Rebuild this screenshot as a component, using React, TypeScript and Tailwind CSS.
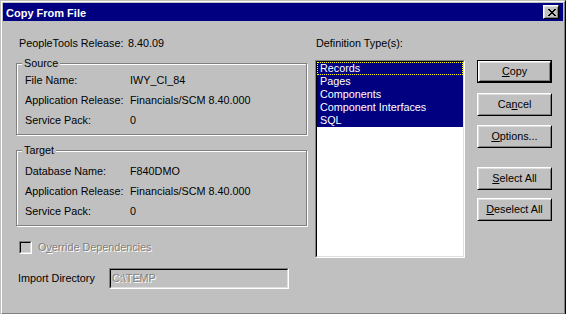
import type { ReactNode } from 'react';

const raised =
  'border border-t-white border-l-white border-r-black border-b-black shadow-[inset_1px_1px_0_#dfdfdf,inset_-1px_-1px_0_#808080]';
const sunkenOuter = 'border border-t-[#808080] border-l-[#808080] border-r-white border-b-white';
const sunkenInner = 'border border-t-black border-l-black border-r-[#dfdfdf] border-b-[#dfdfdf]';

function Push({ children, isDefault }: { children: ReactNode; isDefault?: boolean }) {
  if (isDefault) {
    return (
      <div className="h-[23px] w-[75px] border border-black">
        <div className={`flex h-full w-full items-center justify-center pb-[1px] ${raised}`}>{children}</div>
      </div>
    );
  }
  return <div className={`flex h-[23px] w-[75px] items-center justify-center pb-[1px] ${raised}`}>{children}</div>;
}

function Group({ title, className, children }: { title: string; className: string; children: ReactNode }) {
  return (
    <div className={`relative w-[291px] border border-[#808080] pl-[8px] shadow-[1px_1px_0_#fff,inset_1px_1px_0_#fff] ${className}`}>
      <span className="absolute left-[5px] top-[-7px] bg-[#c0c0c0] px-[2px] leading-[13px]">{title}</span>
      {children}
    </div>
  );
}

function Field({ label, value }: { label: string; value: string }) {
  return (
    <div className="flex h-[20px] leading-[13px]">
      <span className="w-[105px]">{label}</span>
      <span>{value}</span>
    </div>
  );
}

function CloseGlyph() {
  const rows = ['11000011', '01100110', '00111100', '00011000', '00111100', '01100110', '11000011'];
  return (
    <svg width="8" height="7" viewBox="0 0 8 7" shapeRendering="crispEdges">
      {rows.map((r, y) =>
        r.split('').map((c, x) => (c === '1' ? <rect key={`${x}-${y}`} x={x} y={y} width="1" height="1" fill="#000" /> : null))
      )}
    </svg>
  );
}

const TYPES = ['Records', 'Pages', 'Components', 'Component Interfaces', 'SQL'];

export default function App() {
  return (
    <div className="h-[314px] w-[566px] overflow-hidden bg-[#c0c0c0] font-['Liberation_Sans',Arial,sans-serif] text-[10.8px] text-black">
      <div className="h-[315px] w-[566px] border border-t-[#c0c0c0] border-l-[#c0c0c0] border-r-black border-b-black">
        <div className="flex h-full flex-col border border-t-white border-l-white border-r-[#808080] border-b-[#808080] p-[1px]">
          {/* title bar */}
          <div className="flex h-[18px] shrink-0 items-center bg-[#000080] pl-[3px] pr-[4px]">
            <span className="pt-[2px] text-[11px] font-bold leading-[13px] text-white">Copy From File</span>
            <div className={`ml-auto flex h-[14px] w-[16px] items-center justify-center bg-[#c0c0c0] pl-[1px] pt-[1px] ${raised}`}>
              <CloseGlyph />
            </div>
          </div>

          <div className="flex flex-1 pl-[13px] pt-[16px]">
            {/* left column */}
            <div className="flex w-[292px] flex-col">
              <div className="flex pl-[3px] leading-[13px]">
                <span className="w-[109px]">PeopleTools Release:</span>
                <span>8.40.09</span>
              </div>

              <Group title="Source" className="mt-[13px] h-[72px] pt-[10px]">
                <Field label="File Name:" value="IWY_CI_84" />
                <Field label="Application Release:" value="Financials/SCM 8.40.000" />
                <Field label="Service Pack:" value="0" />
              </Group>

              <Group title="Target" className="mt-[15px] h-[76px] pt-[14px]">
                <Field label="Database Name:" value="F840DMO" />
                <Field label="Application Release:" value="Financials/SCM 8.40.000" />
                <Field label="Service Pack:" value="0" />
              </Group>

              <div className="mt-[15px] flex h-[13px] items-center pl-[3px]">
                <div className={`h-[13px] w-[13px] ${sunkenOuter}`}>
                  <div className={`h-full w-full bg-[#c0c0c0] ${sunkenInner}`} />
                </div>
                <span className="ml-[6px] leading-[13px] text-[#808080] [text-shadow:1px_1px_0_#fff]">
                  O<span className="underline">v</span>erride Dependencies
                </span>
              </div>

              <div className="mt-[14px] flex items-center pl-[2px]">
                <span className="w-[91px] leading-[13px]">Import Directory</span>
                <div className={`h-[21px] w-[180px] ${sunkenOuter}`}>
                  <div className={`flex h-full w-full items-center bg-[#c0c0c0] pl-[1px] ${sunkenInner}`}>
                    <span className="leading-[13px] text-[#808080] [text-shadow:1px_1px_0_#fff]">{'C:\\TEMP'}</span>
                  </div>
                </div>
              </div>
            </div>

            {/* definition types */}
            <div className="ml-[7px] flex w-[150px] flex-col">
              <span className="pl-[1px] leading-[13px]">Definition Type(s):</span>
              <div className={`mt-[10px] h-[198px] w-[150px] ${sunkenOuter}`}>
                <div className={`h-full w-full bg-white ${sunkenInner}`}>
                  {TYPES.map((t, i) => (
                    <div
                      key={t}
                      className={`h-[13px] bg-[#000080] pl-[3px] leading-[13px] text-white ${
                        i === 0 ? 'outline-1 outline-dotted outline-[#ffff00] -outline-offset-1' : ''
                      }`}
                    >
                      {t}
                    </div>
                  ))}
                </div>
              </div>
            </div>

            {/* buttons */}
            <div className="ml-[12px] mt-[23px] flex flex-col">
              <Push isDefault>
                <span><span className="underline">C</span>opy</span>
              </Push>
              <div className="mt-[10px]">
                <Push>
                  <span>Ca<span className="underline">n</span>cel</span>
                </Push>
              </div>
              <div className="mt-[9px]">
                <Push>
                  <span><span className="underline">O</span>ptions...</span>
                </Push>
              </div>
              <div className="mt-[19px]">
                <Push>
                  <span><span className="underline">S</span>elect All</span>
                </Push>
              </div>
              <div className="mt-[8px]">
                <Push>
                  <span><span className="underline">D</span>eselect All</span>
                </Push>
              </div>
            </div>
          </div>
        </div>
      </div>
    </div>
  );
}
